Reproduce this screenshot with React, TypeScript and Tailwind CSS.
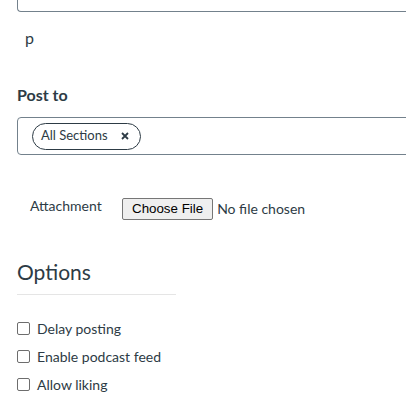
export default function App() {
  return (
    <div
      className="w-[406px] h-[412px] overflow-hidden bg-white pl-[17px] text-[#2d3b45]"
      style={{ fontFamily: "Lato, 'Noto Sans', sans-serif" }}
    >
      {/* bottom edge of the editor box above */}
      <div className="h-[12px] w-[420px] border-l border-b border-[#73818c] rounded-bl-[4px]" />

      <p className="mt-[14px] pl-[8px] text-base leading-[24px]">p</p>

      <h3 className="mt-[33px] text-base font-bold leading-[24px]">Post to</h3>

      <div className="mt-[10px] h-[38px] w-[420px] border border-[#73818c] rounded-l-[4px] flex items-center pl-[14px]">
        <span className="flex items-center h-[27px] pl-[8px] pr-[11px] rounded-full border border-[#2d3b45] text-[13px]">
          All Sections
          <svg className="ml-[13px] w-[8px] h-[8px]" viewBox="0 0 8 8" fill="none" stroke="#2d3b45" strokeWidth="1.8">
            <path d="M1 1L7 7M7 1L1 7" />
          </svg>
        </span>
      </div>

      <div className="mt-[41px] flex items-center pl-[13px]">
        <span className="text-sm w-[92px] mb-[6px]">Attachment</span>
        <button
          className="h-[22px] px-[9px] border border-[#767676] rounded-[2px] bg-[#efefef] text-black text-[13.33px]"
          style={{ fontFamily: "Arial, 'Liberation Sans', sans-serif" }}
        >
          Choose File
        </button>
        <span className="ml-[4px] text-sm">No file chosen</span>
      </div>

      <h2 className="mt-[36px] text-[21px] leading-[28px]">Options</h2>
      <div className="mt-[8px] w-[159px] border-t border-[#e5e5e5]" />

      <div className="mt-[27px] flex flex-col gap-[15px]">
        {["Delay posting", "Enable podcast feed", "Allow liking"].map((label) => (
          <label key={label} className="flex items-center gap-[7px] text-sm leading-[13px]">
            <span className="w-[13px] h-[13px] border border-[#6d6d6d] rounded-[2px]" />
            {label}
          </label>
        ))}
      </div>
    </div>
  );
}
